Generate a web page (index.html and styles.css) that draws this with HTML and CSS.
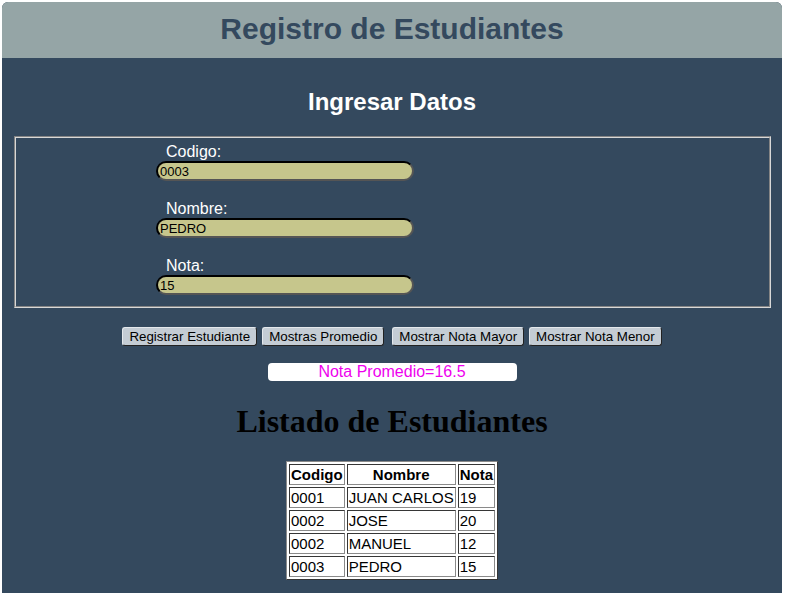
FILE: index.html
```html
<!DOCTYPE html>
<html lang="es">
<head>
<meta charset="utf-8">
<title>Registro de Estudiantes</title>
<link rel="stylesheet" href="styles.css">
</head>
<body>
<div class="page">
  <header class="top">
    <h1 class="title">Registro de Estudiantes</h1>
  </header>
  <main class="content">
    <h2 class="subtitle">Ingresar Datos</h2>
    <div class="form-box">
      <div class="field">
        <label class="label" for="codigo">Codigo:</label>
        <input class="input" id="codigo" type="text" value="0003">
      </div>
      <div class="field">
        <label class="label" for="nombre">Nombre:</label>
        <input class="input" id="nombre" type="text" value="PEDRO">
      </div>
      <div class="field">
        <label class="label" for="nota">Nota:</label>
        <input class="input" id="nota" type="text" value="15">
      </div>
    </div>
    <div class="actions">
      <button class="btn" type="button">Registrar Estudiante</button>
      <button class="btn" type="button">Mostras Promedio</button>
      <button class="btn btn-wide" type="button">Mostrar Nota Mayor</button>
      <button class="btn" type="button">Mostrar Nota Menor</button>
    </div>
    <div class="result">Nota Promedio=16.5</div>
    <h1 class="list-title">Listado de Estudiantes</h1>
    <table class="grid">
      <tr><th>Codigo</th><th>Nombre</th><th>Nota</th></tr>
      <tr><td>0001</td><td>JUAN CARLOS</td><td>19</td></tr>
      <tr><td>0002</td><td>JOSE</td><td>20</td></tr>
      <tr><td>0002</td><td>MANUEL</td><td>12</td></tr>
      <tr><td>0003</td><td>PEDRO</td><td>15</td></tr>
    </table>
  </main>
</div>
</body>
</html>
```
FILE: styles.css
```css
html, body {
  margin: 0;
  padding: 0;
  background: #ffffff;
}

body {
  font-family: "Liberation Sans", Arial, sans-serif;
}

.page {
  margin: 2px 3px 0 2px;
  min-height: 620px;
  background: #34495e;
  border-radius: 6px 6px 0 0;
  overflow: hidden;
}

.top {
  height: 56px;
  box-sizing: border-box;
  padding-top: 10px;
  background: #95a5a6;
  text-align: center;
}

.title {
  margin: 0;
  font-family: "Liberation Sans", Arial, sans-serif;
  font-size: 30px;
  font-weight: bold;
  line-height: 34px;
  color: #34495e;
}

.content {
  display: flex;
  flex-direction: column;
  align-items: center;
}

.subtitle {
  margin: 30px 0 20px;
  font-family: "Liberation Sans", Arial, sans-serif;
  font-size: 24px;
  font-weight: bold;
  line-height: 28px;
  color: #ffffff;
}

.form-box {
  align-self: stretch;
  margin: 0 11px 0 12px;
  padding: 5px 0 11px 140px;
  border: 2px groove #d8d8d8;
  display: flex;
  flex-direction: column;
  gap: 19px;
}

.field {
  display: flex;
  flex-direction: column;
  align-items: flex-start;
}

.label {
  display: block;
  padding-left: 10px;
  font-size: 16px;
  line-height: 18px;
  color: #ffffff;
}

.input {
  display: block;
  box-sizing: border-box;
  width: 258px;
  height: 20px;
  margin: 0;
  padding: 0 2px;
  border: 2px inset #555555;
  border-radius: 10px;
  background: #c6c68c;
  font-family: "Liberation Sans", Arial, sans-serif;
  font-size: 13px;
  color: #000000;
}

.actions {
  margin-top: 19px;
  display: flex;
  gap: 5px;
}

.btn {
  margin: 0;
  padding: 1px 6px;
  border: 1px solid;
  border-color: #e4e8ec #222222 #222222 #e4e8ec;
  border-radius: 3px;
  background: #c4ccd4;
  font-family: "Liberation Sans", Arial, sans-serif;
  font-size: 13.33px;
  line-height: 15px;
  color: #000000;
}

.btn-wide {
  margin-left: 3px;
}

.result {
  margin-top: 17px;
  width: 249px;
  height: 18px;
  background: #ffffff;
  border-radius: 4px;
  text-align: center;
  font-size: 16px;
  line-height: 18px;
  color: #ee00ee;
}

.list-title {
  margin: 22px 0 21px;
  font-family: "Liberation Serif", "Times New Roman", serif;
  font-size: 32px;
  font-weight: bold;
  line-height: 37px;
  color: #000000;
}

.grid {
  background: #ffffff;
  border: 1px outset #8a8a8a;
  border-spacing: 2px;
  font-family: "Liberation Sans", Arial, sans-serif;
  font-size: 15px;
  color: #000000;
}

.grid th,
.grid td {
  border: 1px inset #8a8a8a;
  padding: 1px;
  line-height: 17px;
}

.grid th {
  font-weight: bold;
  text-align: center;
}

.grid td {
  text-align: left;
}
```
